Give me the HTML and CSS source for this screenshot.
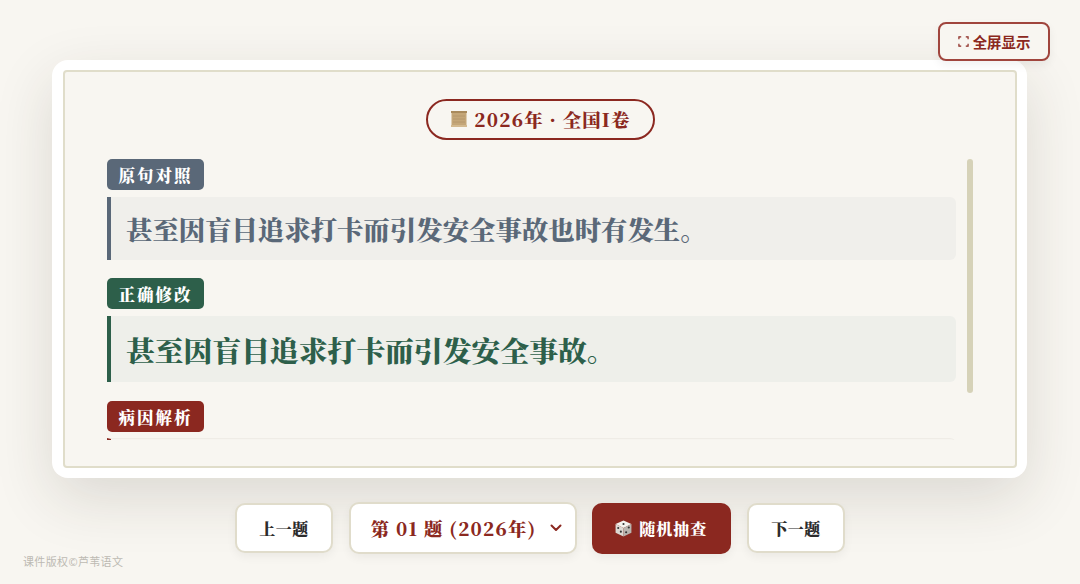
FILE: index.html
```html
<!DOCTYPE html>
<html lang="zh-CN">
<head>
    <meta charset="UTF-8">
    <meta name="viewport" content="width=device-width, initial-scale=1.0">
    <title>病句修改</title>
    <link rel="stylesheet" href="styles.css">
</head>
<body>
    <button class="fullscreen-btn">
        <svg class="fs-icon" viewBox="0 0 12 12" fill="none" stroke="currentColor" stroke-width="1.300">
            <path d="M1 3.500V1H3.500M8.500 1H11V3.500M11 8.500V11H8.500M3.500 11H1V8.500"/>
        </svg>
        全屏显示
    </button>

    <div class="card">
        <div class="card-inner">
            <div class="year-row">
                <div class="year-badge">
                    <svg class="scroll-icon" viewBox="0 0 18 18">
                        <rect x="1.500" y="1" width="15" height="16" fill="#c4a678"/>
                        <rect x="1" y="1" width="16" height="2" fill="#a98a5c"/>
                        <path d="M3 6H15M3 9H15M3 12H15" stroke="#b3956a" stroke-width="0.800"/>
                        <rect x="1" y="15" width="16" height="2" fill="#d3b98f"/>
                    </svg>
                    2026年 · 全国I卷
                </div>
            </div>

            <div class="scroll-area">
                <div class="label label-gray">原句对照</div>
                <div class="sentence sentence-gray">甚至因盲目追求打卡而引发安全事故也时有发生。</div>

                <div class="label label-green">正确修改</div>
                <div class="sentence sentence-green">甚至因盲目追求打卡而引发安全事故。</div>

                <div class="label label-red">病因解析</div>
                <div class="sentence sentence-red"></div>

                <div class="scroll-thumb"></div>
            </div>
        </div>
    </div>

    <div class="controls">
        <button class="btn">上一题</button>
        <div class="picker">
            第 01 题 (2026年)
            <svg class="chevron" viewBox="0 0 12 8" fill="none" stroke="currentColor" stroke-width="2" stroke-linecap="round" stroke-linejoin="round">
                <path d="M1.500 1.500L6 6L10.500 1.500"/>
            </svg>
        </div>
        <button class="btn btn-random">
            <svg class="dice-icon" viewBox="0 0 18 18">
                <path d="M9 1.500L16.500 4.800L9 8.500L1.500 4.800Z" fill="#f4f2ee"/>
                <path d="M1.500 4.800L9 8.500V16.500L1.500 13Z" fill="#dcd8d2"/>
                <path d="M16.500 4.800L9 8.500V16.500L16.500 13Z" fill="#b9b5b0"/>
                <circle cx="9" cy="4.800" r="1" fill="#333"/>
                <circle cx="4" cy="8.500" r="1" fill="#333"/>
                <circle cx="6.500" cy="12" r="1" fill="#333"/>
                <circle cx="14" cy="8" r="1" fill="#333"/>
                <circle cx="11.500" cy="12.500" r="1" fill="#333"/>
            </svg>
            随机抽查
        </button>
        <button class="btn">下一题</button>
    </div>

    <div class="copyright">课件版权©芦苇语文</div>
</body>
</html>
```

FILE: styles.css
```css
* {
    box-sizing: border-box;
}

body {
    margin: 0;
    height: 584px;
    overflow: hidden;
    padding: 60px 52px 0;
    background-color: #f8f6f1;
    font-family: "Noto Serif CJK SC", "Liberation Serif", "Noto Sans CJK SC", serif;
    display: flex;
    flex-direction: column;
    align-items: stretch;
}

button {
    font-family: inherit;
    cursor: pointer;
}

.fullscreen-btn {
    position: absolute;
    top: 22px;
    left: 938px;
    width: 112px;
    height: 39px;
    display: flex;
    align-items: center;
    justify-content: center;
    gap: 4px;
    padding: 0 0 1px;
    background-color: #f8f6f1;
    color: #8b2820;
    border: 2px solid #a0453d;
    border-radius: 8px;
    font-family: "Noto Sans CJK SC", sans-serif;
    font-size: 14.400px;
    font-weight: 700;
    box-shadow: 0 4px 10px rgba(0, 0, 0, 0.06);
    z-index: 2;
}

.fs-icon {
    width: 11px;
    height: 11px;
}

.card {
    width: 975px;
    height: 418px;
    padding: 10px 10px 10px 11px;
    background-color: #fff;
    border-radius: 16px;
    box-shadow: 0 20px 60px rgba(50, 45, 30, 0.14);
}

.card-inner {
    height: 398px;
    padding: 27px 41px 0 42px;
    background-color: #f8f6f1;
    border: 2px solid #e0ddca;
    border-radius: 4px;
    display: flex;
    flex-direction: column;
    align-items: stretch;
}

.year-row {
    display: flex;
    justify-content: center;
    margin-bottom: 19px;
}

.year-badge {
    width: 229px;
    height: 41px;
    display: flex;
    align-items: center;
    justify-content: center;
    gap: 6px;
    padding-bottom: 1px;
    border: 2px solid #8b2820;
    border-radius: 21px;
    color: #8b2820;
    font-size: 18.400px;
    font-weight: 900;
    letter-spacing: 1.200px;
}

.scroll-icon {
    width: 18px;
    height: 18px;
}

.scroll-area {
    position: relative;
    height: 281px;
    overflow: hidden;
    padding-right: 18px;
}

.scroll-thumb {
    position: absolute;
    top: 0;
    right: 1px;
    width: 6px;
    height: 234px;
    background-color: #d6d2b8;
    border-radius: 3px;
}

.label {
    width: 97px;
    height: 31px;
    margin-bottom: 7px;
    display: flex;
    align-items: center;
    justify-content: center;
    color: #fff;
    font-size: 16.500px;
    font-weight: 900;
    letter-spacing: 2px;
    border-radius: 5px;
}

.label-gray { background-color: #5a6878; }
.label-green { background-color: #2d5f4a; }
.label-red {
    margin-bottom: 6px;
    background-color: #8b2820;
}

.sentence {
    margin-bottom: 18px;
    padding-left: 15px;
    display: flex;
    align-items: center;
    font-weight: 900;
    border-left: 4px solid;
    border-radius: 0 6px 6px 0;
}

.sentence-gray {
    height: 63px;
    color: #5a6878;
    font-size: 26.400px;
    background-color: #f0efeb;
    border-color: #5a6878;
}

.sentence-green {
    height: 66px;
    margin-bottom: 19px;
    color: #2d5f4a;
    font-size: 28.800px;
    background-color: #eeefea;
    border-color: #2d5f4a;
}

.sentence-red {
    height: 60px;
    background-color: #f6f4ef;
    border-color: #8b2820;
    border-top: 1px solid #efece6;
}

.controls {
    margin-top: 24px;
    display: flex;
    justify-content: center;
    align-items: center;
    gap: 15.670px;
}

.btn {
    width: 98px;
    height: 50px;
    display: flex;
    align-items: center;
    justify-content: center;
    gap: 6px;
    padding: 0;
    background-color: #fff;
    color: #2c2c2c;
    border: 2px solid #e0dccb;
    border-radius: 10px;
    font-size: 16px;
    font-weight: 900;
    letter-spacing: 0.500px;
    box-shadow: 0 4px 10px rgba(0, 0, 0, 0.05);
}

.picker {
    width: 228px;
    height: 52px;
    display: flex;
    align-items: center;
    gap: 13px;
    padding-left: 20px;
    background-color: #fff;
    color: #8b2820;
    border: 2px solid #e0dccb;
    border-radius: 10px;
    font-size: 18.400px;
    font-weight: 900;
    letter-spacing: 1.200px;
    box-shadow: 0 4px 10px rgba(0, 0, 0, 0.05);
}

.chevron {
    width: 12px;
    height: 8px;
}

.btn-random {
    width: 139px;
    height: 51px;
    padding-right: 2px;
    background-color: #8b2820;
    color: #fff;
    border: none;
    letter-spacing: 1px;
}

.dice-icon {
    width: 19px;
    height: 19px;
}

.copyright {
    position: absolute;
    left: 23px;
    top: 553px;
    color: #bdbab3;
    font-family: "Noto Sans CJK SC", sans-serif;
    font-size: 11px;
    letter-spacing: 0.350px;
}
```
